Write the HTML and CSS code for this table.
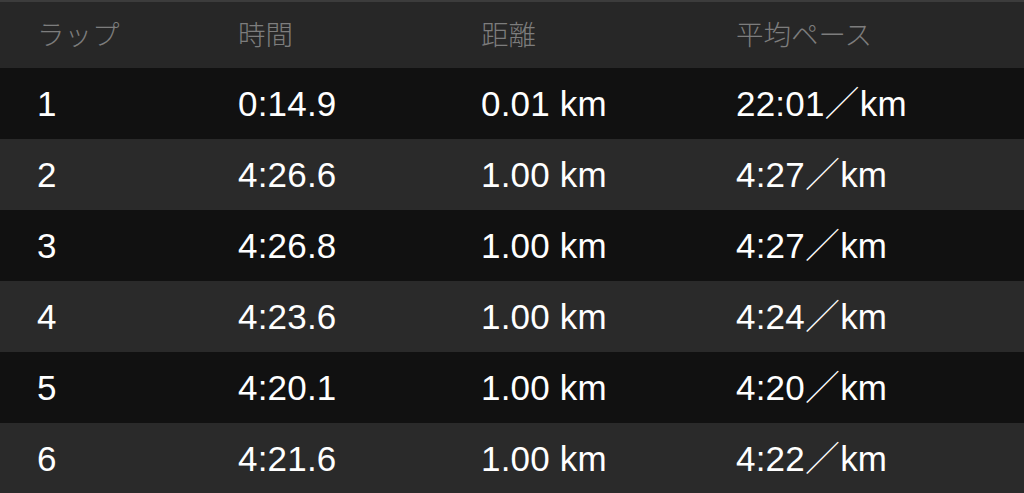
FILE: index.html
```html
<!DOCTYPE html>
<html lang="ja">
<head>
  <meta charset="UTF-8" />
  <meta name="viewport" content="width=device-width, initial-scale=1.0"/>
  <title>ラップ</title>
  <link rel="stylesheet" href="styles.css">
</head>
<body>
  <div class="laps">
    <div class="row head">
      <div>ラップ</div>
      <div>時間</div>
      <div>距離</div>
      <div>平均ペース</div>
    </div>
    <div class="row dark">
      <div>1</div><div>0:14.9</div><div>0.01 km</div><div>22:01<span class="sl">／</span>km</div>
    </div>
    <div class="row light">
      <div>2</div><div>4:26.6</div><div>1.00 km</div><div>4:27<span class="sl">／</span>km</div>
    </div>
    <div class="row dark">
      <div>3</div><div>4:26.8</div><div>1.00 km</div><div>4:27<span class="sl">／</span>km</div>
    </div>
    <div class="row light">
      <div>4</div><div>4:23.6</div><div>1.00 km</div><div>4:24<span class="sl">／</span>km</div>
    </div>
    <div class="row dark">
      <div>5</div><div>4:20.1</div><div>1.00 km</div><div>4:20<span class="sl">／</span>km</div>
    </div>
    <div class="row light">
      <div>6</div><div>4:21.6</div><div>1.00 km</div><div>4:22<span class="sl">／</span>km</div>
    </div>
  </div>
</body>
</html>
```

FILE: styles.css
```css
html, body {
  margin: 0;
  padding: 0;
  background: #2a2a2a;
}
body {
  font-family: "Liberation Sans", "Noto Sans CJK JP", sans-serif;
  color: #ffffff;
  overflow: hidden;
}
.laps {
  width: 1024px;
  border-top: 2px solid #3c3c3c;
}
.row {
  display: grid;
  grid-template-columns: 201px 243px 255px 1fr;
  align-items: center;
  padding-left: 37px;
  height: 71px;
  font-size: 35px;
  line-height: 40px;
  letter-spacing: 0.2px;
}
.sl {
  font-family: "Noto Sans CJK JP", sans-serif;
  font-weight: 300;
  line-height: 0;
}
.head {
  height: 62px;
  padding-bottom: 4px;
  background: #272727;
  color: #7d7d7d;
  font-size: 27.5px;
  letter-spacing: 0;
  font-family: "Noto Sans CJK JP", sans-serif;
  font-weight: 300;
}
.dark {
  background: #111111;
}
.light {
  background: #2a2a2a;
}
```
